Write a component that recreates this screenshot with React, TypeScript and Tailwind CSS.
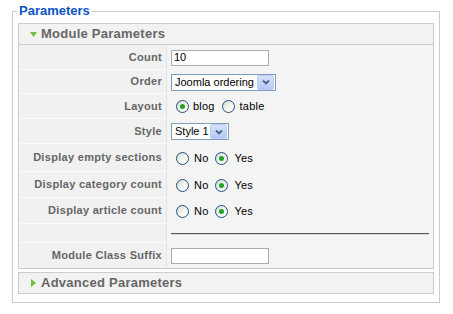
const ROWS_TOP = [
  { label: "Count", h: "h-[25px]" },
  { label: "Order", h: "h-[24px]" },
  { label: "Layout", h: "h-[25px]" },
  { label: "Style", h: "h-[25px]" },
];

function Radio({ checked, ml = "ml-[5px]" }: { checked?: boolean; ml?: string }) {
  return (
    <span className={`${ml} flex h-[13px] w-[13px] shrink-0 items-center justify-center rounded-full border border-[#1c5180] bg-gradient-to-br from-[#d6d6ce] via-[#f4f4f0] to-white`}>
      {checked && <span className="h-[5px] w-[5px] rounded-full bg-[#21a121]" />}
    </span>
  );
}

function FakeSelect({ value, width }: { value: string; width: string }) {
  return (
    <div className={`flex h-[17px] items-center border border-[#7f9db9] bg-white ${width}`}>
      <span className="flex-1 pl-[3px] text-[11px] leading-none text-black">{value}</span>
      <span className="mr-[1px] flex h-[15px] w-[17px] items-center justify-center rounded-[2px] border border-[#b9cdf5] bg-gradient-to-b from-[#d7e3fd] to-[#b4c8f6]">
        <svg width="8" height="6" viewBox="0 0 8 6">
          <path d="M1 1.5 L4 4.5 L7 1.5" fill="none" stroke="#4d6185" strokeWidth="1.8" />
        </svg>
      </span>
    </div>
  );
}

function YesNo() {
  return (
    <div className="flex items-center">
      <Radio />
      <span className="ml-[5px] text-[11px] tracking-[0.2px] text-black">No</span>
      <Radio checked ml="ml-[7px]" />
      <span className="ml-[6px] text-[11px] tracking-[0.2px] text-black">Yes</span>
    </div>
  );
}

function Row({ label, h, children }: { label: string; h: string; children?: React.ReactNode }) {
  return (
    <div className={`flex ${h}`}>
      <div className="flex w-[148px] shrink-0 items-center justify-end border-r border-b border-r-[#e2e2e2] border-b-[#fafafa] bg-[#f1f1f1] pr-[4px] text-[11px] font-bold tracking-[0.3px] text-[#666]">
        {label}
      </div>
      <div className="flex flex-1 items-center pl-[4px] pr-[4px]">{children}</div>
    </div>
  );
}

function PanelHeader({ title, open }: { title: string; open?: boolean }) {
  return (
    <div className={`flex h-[20px] items-center bg-[#f2f2f2] ${open ? "border-b border-[#ccc] h-[21px]" : ""}`}>
      <span className="flex w-[22px] justify-center pl-[6px]">
        {open ? (
          <svg width="7" height="5" viewBox="0 0 7 5">
            <path d="M0 0 H7 L3.5 5 Z" fill="#6fbf3a" />
          </svg>
        ) : (
          <svg width="5" height="8" viewBox="0 0 5 8">
            <path d="M0 0 V8 L5 4 Z" fill="#6fbf3a" />
          </svg>
        )}
      </span>
      <span className="text-[13px] font-bold leading-[20px] tracking-[0.25px] text-[#666]">{title}</span>
    </div>
  );
}

export default function App() {
  return (
    <div className="h-[314px] w-[453px] bg-white pl-[12px] pt-[3px] font-['Liberation_Sans',Arial,sans-serif]">
      <fieldset className="w-[428px] border border-[#ccc] px-[5px] pb-[8px] pt-[4px]">
        <legend className="-ml-[1px] px-[2px] text-[13px] font-bold leading-[16px] text-[#0b55c4]">Parameters</legend>

        <div className="mb-[3px] border border-[#ccc] bg-[#f4f4f4]">
          <PanelHeader title="Module Parameters" open />
          {ROWS_TOP.map((r) => (
            <Row key={r.label} label={r.label} h={r.h}>
              {r.label === "Count" && (
                <div className="flex h-[16px] w-[98px] items-center border border-[#a5acb2] bg-white pl-[2px] text-[11px] text-black">10</div>
              )}
              {r.label === "Order" && <FakeSelect value="Joomla ordering" width="w-[105px]" />}
              {r.label === "Layout" && (
                <div className="flex items-center">
                  <Radio checked />
                  <span className="ml-[4px] text-[11px] tracking-[0.2px] text-black">blog</span>
                  <Radio ml="ml-[7px]" />
                  <span className="ml-[5px] text-[11px] tracking-[0.2px] text-black">table</span>
                </div>
              )}
              {r.label === "Style" && <FakeSelect value="Style 1" width="w-[58px]" />}
            </Row>
          ))}
          <Row label="Display empty sections" h="h-[28px]">
            <YesNo />
          </Row>
          <Row label="Display category count" h="h-[26px]">
            <YesNo />
          </Row>
          <Row label="Display article count" h="h-[26px]">
            <YesNo />
          </Row>
          <Row label="" h="h-[19px]">
            <div className="h-[2px] w-full border-t border-[#555] bg-[#d8d8d8]" />
          </Row>
          <div className="flex h-[25px]">
            <div className="flex w-[148px] shrink-0 items-center justify-end border-r border-[#e2e2e2] bg-[#f1f1f1] pr-[4px] text-[11px] font-bold tracking-[0.3px] text-[#666]">
              Module Class Suffix
            </div>
            <div className="flex flex-1 items-center pl-[4px]">
              <div className="h-[16px] w-[98px] border border-[#a5acb2] bg-white" />
            </div>
          </div>
        </div>

        <div className="border border-[#ccc] bg-[#f4f4f4]">
          <PanelHeader title="Advanced Parameters" />
        </div>
      </fieldset>
    </div>
  );
}
